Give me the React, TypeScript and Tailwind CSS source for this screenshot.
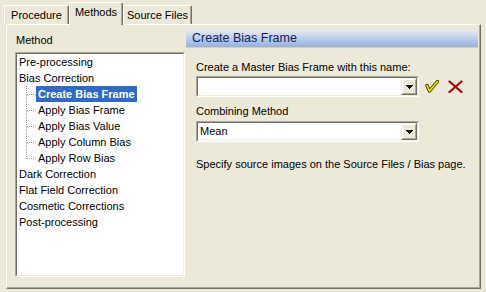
import React from 'react'

function Tab({ label, selected, w }: { label: string; selected?: boolean; w: string }) {
  return (
    <div
      className={`${w} ${selected ? 'h-[23px] -mb-px relative z-10' : 'h-[19px]'} bg-[#ECE9D8] border-t border-l border-r border-t-white border-l-white border-r-[#716F64] rounded-t-[2px] shadow-[inset_-1px_0_0_#ACA899] pt-[3px] text-center leading-[13px] whitespace-nowrap`}
    >
      {label}
    </div>
  )
}

function TopItem({ label }: { label: string }) {
  return <div className="h-[16px] leading-[16px] px-[2px] whitespace-nowrap">{label}</div>
}

function ChildItem({ label, selected, last }: { label: string; selected?: boolean; last?: boolean }) {
  return (
    <div className="flex h-[16px]">
      <div className="ml-[9px] w-[10px] flex flex-col">
        <div className="h-[9px] border-l border-b border-dotted border-[#A0A0A0]" />
        <div className={`h-[7px] ${last ? '' : 'border-l border-dotted border-[#A0A0A0]'}`} />
      </div>
      <div className={`px-[2px] leading-[16px] whitespace-nowrap ${selected ? 'bg-[#316AC5] text-white font-bold' : ''}`}>
        {label}
      </div>
    </div>
  )
}

function Sunken({ className, children }: { className?: string; children?: React.ReactNode }) {
  return (
    <div className={`border border-t-[#ACA899] border-l-[#ACA899] border-b-white border-r-white ${className ?? ''}`}>
      <div className="h-full border border-t-[#716F64] border-l-[#716F64] border-b-[#F1EFE2] border-r-[#F1EFE2] bg-white">
        {children}
      </div>
    </div>
  )
}

function DropButton() {
  return (
    <div className="w-[16px] h-full border border-t-[#F1EFE2] border-l-[#F1EFE2] border-b-[#716F64] border-r-[#716F64]">
      <div className="h-full border border-t-white border-l-white border-b-[#ACA899] border-r-[#ACA899] bg-[#ECE9D8] flex items-center justify-center">
        <svg width="7" height="4" viewBox="0 0 7 4" shapeRendering="crispEdges">
          <rect x="0" y="0" width="7" height="1" fill="#000" />
          <rect x="1" y="1" width="5" height="1" fill="#000" />
          <rect x="2" y="2" width="3" height="1" fill="#000" />
          <rect x="3" y="3" width="1" height="1" fill="#000" />
        </svg>
      </div>
    </div>
  )
}

function Combo({ value }: { value?: string }) {
  return (
    <Sunken className="w-[223px] h-[21px]">
      <div className="flex h-full">
        <div className="flex-1 pl-[2px] leading-[17px] whitespace-nowrap">{value}</div>
        <DropButton />
      </div>
    </Sunken>
  )
}

export default function App() {
  return (
    <div className="w-[486px] h-[292px] bg-[#ECE9D8] overflow-hidden text-[11px] leading-[13px] text-black font-['Liberation_Sans',Arial,sans-serif]">
      {/* Tabs */}
      <div className="flex items-end h-[24px] pl-[4px]">
        <Tab label="Procedure" w="w-[65px]" />
        <Tab label="Methods" w="w-[54px]" selected />
        <Tab label="Source Files" w="w-[69px]" />
      </div>

      {/* Tab page */}
      <div className="ml-[6px] w-[475px] h-[265px] border-t border-l border-r border-b border-t-white border-l-white border-r-[#716F64] border-b-[#716F64] shadow-[inset_-1px_-1px_0_#ACA899] flex">
        {/* Left column */}
        <div className="pl-[8px] flex flex-col">
          <div className="mt-[9px] pl-px h-[13px]">Method</div>
          <Sunken className="mt-[5px] w-[170px] h-[225px]">
            <div className="pt-0">
              <TopItem label="Pre-processing" />
              <TopItem label="Bias Correction" />
              <ChildItem label="Create Bias Frame" selected />
              <ChildItem label="Apply Bias Frame" />
              <ChildItem label="Apply Bias Value" />
              <ChildItem label="Apply Column Bias" />
              <ChildItem label="Apply Row Bias" last />
              <TopItem label="Dark Correction" />
              <TopItem label="Flat Field Correction" />
              <TopItem label="Cosmetic Corrections" />
              <TopItem label="Post-processing" />
            </div>
          </Sunken>
        </div>

        {/* Right column */}
        <div className="ml-px flex flex-col">
          <div className="mt-[5px] w-[292px] h-[18px] bg-linear-to-b from-[#E6EAF0] to-[#93B1E2] border-b border-[#D6CFB4] pl-[6px] text-[12.5px] leading-[17px] text-[#14205A]">
            Create Bias Frame
          </div>
          <div className="pl-[10px] flex flex-col">
            <div className="mt-[13px] h-[13px]">Create a Master Bias Frame with this name:</div>
            <div className="mt-[2px] flex items-center">
              <Combo />
              <svg className="ml-[6px]" width="14" height="13" viewBox="0 0 14 13">
                <polyline points="2,5.5 4.5,11 12.5,1.5" fill="none" stroke="#4A4400" strokeWidth="3.4" strokeLinejoin="round" strokeLinecap="round" />
                <polyline points="2,5.5 4.5,11 12.5,1.5" fill="none" stroke="#F2E400" strokeWidth="1.6" strokeLinejoin="round" strokeLinecap="round" />
              </svg>
              <svg className="ml-[9px]" width="15" height="13" viewBox="0 0 15 13">
                <line x1="1.5" y1="1.5" x2="13.5" y2="12" stroke="#A80000" strokeWidth="2.2" strokeLinecap="round" />
                <line x1="13.5" y1="1.5" x2="1.5" y2="12" stroke="#A80000" strokeWidth="2.2" strokeLinecap="round" />
              </svg>
            </div>
            <div className="mt-[8px] h-[13px]">Combining Method</div>
            <div className="mt-[3px]">
              <Combo value="Mean" />
            </div>
            <div className="mt-[16px] whitespace-nowrap">Specify source images on the Source Files / Bias page.</div>
          </div>
        </div>
      </div>
    </div>
  )
}
